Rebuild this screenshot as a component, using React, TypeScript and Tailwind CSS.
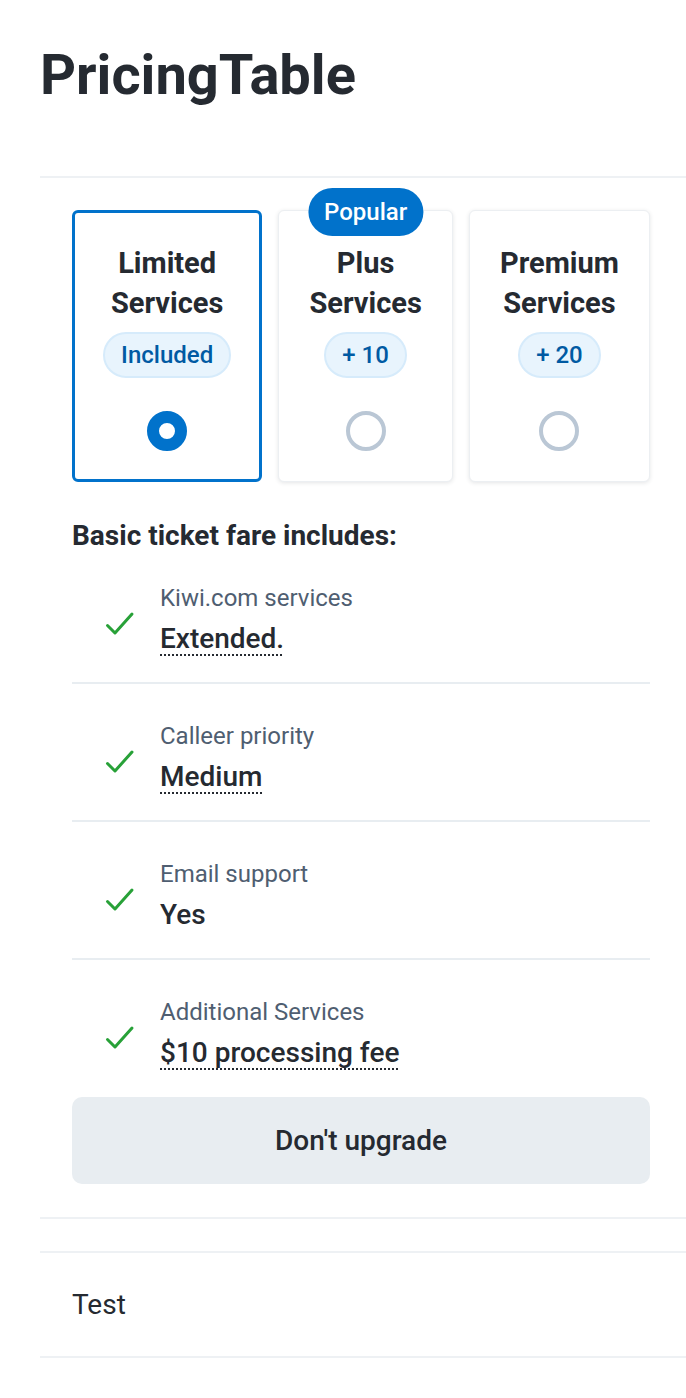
import { useState } from "react";

const plans = [
  { id: "limited", name: ["Limited", "Services"], badge: "Included", popular: false },
  { id: "plus", name: ["Plus", "Services"], badge: "+ 10", popular: true },
  { id: "premium", name: ["Premium", "Services"], badge: "+ 20", popular: false },
];

const features = [
  { label: "Kiwi.com services", value: "Extended.", dotted: true },
  { label: "Calleer priority", value: "Medium", dotted: true },
  { label: "Email support", value: "Yes", dotted: false },
  { label: "Additional Services", value: "$10 processing fee", dotted: true },
];

function Check() {
  return (
    <svg width="30" height="30" viewBox="0 0 30 30" fill="none">
      <path
        d="M2.5 18.5L10 26L27 7"
        stroke="#28a138"
        strokeWidth="3"
        strokeLinecap="round"
        strokeLinejoin="round"
      />
    </svg>
  );
}

export default function App() {
  const [selected, setSelected] = useState("limited");

  return (
    <div className="bg-white min-h-screen font-['Roboto',sans-serif] text-[#252a31]">
      <div className="pl-10">
        <h1 className="pt-[41px] text-[56px] font-bold leading-[68px]">PricingTable</h1>

        <div className="mt-[67px] h-[2px] bg-[#eef1f4]" />

        <div className="pl-8 pr-9">
          {/* CARDS */}
          <div className="flex gap-4 pt-[32px]">
            {plans.map((p) => {
              const active = selected === p.id;
              return (
                <button
                  key={p.id}
                  onClick={() => setSelected(p.id)}
                  className={
                    "relative flex-auto flex flex-col items-center rounded-[6px] bg-white " +
                    (active
                      ? "border-[3px] border-[#0172cb] pt-[30px] pb-[28px] px-4"
                      : "border border-[#eceff2] shadow-[0_1px_4px_rgba(37,42,49,0.12)] pt-[32px] pb-[30px] px-[18px]")
                  }
                >
                  {p.popular && (
                    <span className="absolute -top-[23px] left-1/2 -translate-x-1/2 rounded-full bg-[#0172cb] px-4 h-[48px] flex items-center text-[24px] font-medium text-white">
                      Popular
                    </span>
                  )}
                  <span className="text-[29px] font-bold leading-[40px] text-center">
                    {p.name[0]}
                    <br />
                    {p.name[1]}
                  </span>
                  <span className="mt-[9px] h-[46px] flex items-center rounded-full border-2 border-[#d6ebfb] bg-[#e8f4fd] px-4 text-[24px] font-medium text-[#005aa3]">
                    {p.badge}
                  </span>
                  <span
                    className={
                      "mt-[33px] w-10 h-10 rounded-full " +
                      (active ? "border-[12px] border-[#0172cb]" : "border-[4px] border-[#bac7d5]")
                    }
                  />
                </button>
              );
            })}
          </div>

          {/* FEATURES */}
          <h2 className="mt-[44px] text-[28px] font-bold leading-[20px]">
            Basic ticket fare includes:
          </h2>

          <div className="flex flex-col">
            {features.map((f, i) => (
              <div
                key={f.label}
                className={
                  "flex items-center pl-[33px] pt-[38px] " +
                  (i < features.length - 1 ? "border-b-2 border-[#e8edf1] pb-[23px]" : "pb-[24px]")
                }
              >
                <Check />
                <div className="ml-[25px] flex flex-col">
                  <span className="text-[24px] leading-[28px] text-[#4f5e71]">{f.label}</span>
                  <span
                    className={
                      "mt-[7px] text-[28px] font-medium leading-[40px] " +
                      (f.dotted ? "underline decoration-dotted decoration-[2px] underline-offset-[6px]" : "")
                    }
                  >
                    {f.value}
                  </span>
                </div>
              </div>
            ))}
          </div>

          <button className="w-full h-[87px] rounded-[10px] bg-[#e8edf1] text-[28px] font-medium">
            Don't upgrade
          </button>
        </div>

        <div className="mt-[33px] h-[2px] bg-[#eef1f4]" />
        <div className="h-[32px]" />
        <div className="h-[2px] bg-[#eef1f4]" />
        <div className="pl-8 h-[103px] flex items-center text-[28px]">Test</div>
        <div className="h-[2px] bg-[#eef1f4]" />
      </div>
    </div>
  );
}
